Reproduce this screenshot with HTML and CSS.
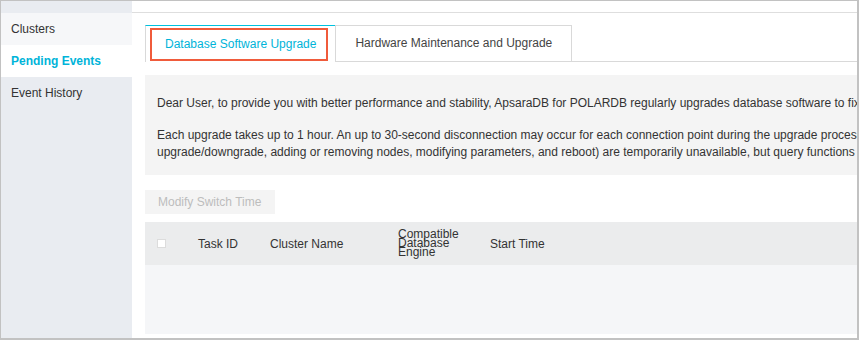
FILE: index.html
```html
<!DOCTYPE html>
<html lang="en">
<head>
    <meta charset="UTF-8">
    <meta name="viewport" content="width=device-width, initial-scale=1.0">
    <title>Pending Events</title>
    <link rel="stylesheet" href="styles.css">
</head>
<body>
    <div class="frame">
        <div class="sidebar">
            <div class="nav-item nav-light">Clusters</div>
            <div class="nav-item nav-active">Pending Events</div>
            <div class="nav-item">Event History</div>
        </div>

        <div class="main">
            <div class="content">
                <div class="tabs">
                    <div class="tab tab-active">
                        Database Software Upgrade
                        <span class="highlight"></span>
                    </div>
                    <div class="tab">Hardware Maintenance and Upgrade</div>
                </div>

                <div class="notice">
                    <p>Dear User, to provide you with better performance and stability, ApsaraDB for POLARDB regularly upgrades database software to fix bugs and improve the database engine.</p>
                    <p>Each upgrade takes up to 1 hour. An up to 30-second disconnection may occur for each connection point during the upgrade process, and some features (such as configuration upgrade/downgrade, adding or removing nodes, modifying parameters, and reboot) are temporarily unavailable, but query functions are not affected.</p>
                </div>

                <button class="btn" disabled>Modify Switch Time</button>

                <div class="table">
                    <div class="thead">
                        <div class="cell cell-check"><span class="checkbox"></span></div>
                        <div class="cell">Task ID</div>
                        <div class="cell">Cluster Name</div>
                        <div class="cell cell-wrap">Compatible Database Engine</div>
                        <div class="cell">Start Time</div>
                    </div>
                    <div class="tbody"></div>
                </div>
            </div>
        </div>
    </div>
</body>
</html>
```

FILE: styles.css
```css
body {
    font-family: Arial, "Liberation Sans", sans-serif;
    font-size: 12px;
    color: #333;
    margin: 0;
    padding: 0;
}
.frame {
    width: 859px;
    height: 340px;
    box-sizing: border-box;
    border: 1px solid #c2c2c2;
    border-right-width: 2px;
    border-bottom-width: 2px;
    display: flex;
    overflow: hidden;
}
.sidebar {
    width: 131px;
    flex-shrink: 0;
    padding-top: 12px;
    background-color: #e9ecf1;
}
.nav-item {
    height: 32px;
    line-height: 32px;
    padding-left: 10px;
}
.nav-light {
    background-color: #f6f7f9;
}
.nav-active {
    background-color: #fff;
    color: #00b4d9;
    font-weight: bold;
}
.main {
    flex-grow: 1;
    overflow: hidden;
    padding-top: 11px;
    background-color: #fff;
}
.content {
    border-top: 1px solid #dedede;
    padding: 12px 0 0 13px;
}
.tabs {
    display: flex;
    align-items: flex-end;
    border-bottom: 1px solid #d9d9d9;
    height: 36px;
}
.tab {
    height: 35px;
    line-height: 35px;
    padding: 0 19px 0 19px;
    border: 1px solid #d9d9d9;
    border-bottom: none;
    background-color: #fff;
    color: #444;
}
.tab-active {
    position: relative;
    height: 36px;
    line-height: 36px;
    margin-bottom: -1px;
    padding: 0 19px 0 19px;
    border-top-color: #00c1de;
    border-right: none;
    color: #00b4d9;
}
.highlight {
    position: absolute;
    top: 2px;
    left: 4px;
    right: 7px;
    bottom: 1px;
    border: 2px solid #f05b3b;
}
.notice {
    width: 1020px;
    box-sizing: border-box;
    margin-top: 13px;
    padding: 20px 12px 14px;
    background-color: #f4f4f4;
    line-height: 17px;
}
.notice p {
    margin: 0 0 15px;
}
.notice p:last-child {
    margin-bottom: 0;
}
.btn {
    display: block;
    margin-top: 15px;
    height: 24px;
    padding: 0 14px 0 13px;
    border: none;
    background-color: #f4f4f4;
    color: #bdbdbd;
    font-family: inherit;
    font-size: 12px;
}
.table {
    margin-top: 8px;
}
.thead {
    display: grid;
    grid-template-columns: 53px 72px 128px 92px 1fr;
    align-items: center;
    height: 43px;
    background-color: #ebeced;
}
.cell-check {
    padding-left: 12px;
    display: flex;
}
.checkbox {
    width: 7px;
    height: 7px;
    border: 1px solid #dcdcdc;
    background-color: #fff;
}
.cell-wrap {
    width: 60px;
    line-height: 9px;
}
.tbody {
    height: 69px;
    background-color: #f5f6f8;
}
```
